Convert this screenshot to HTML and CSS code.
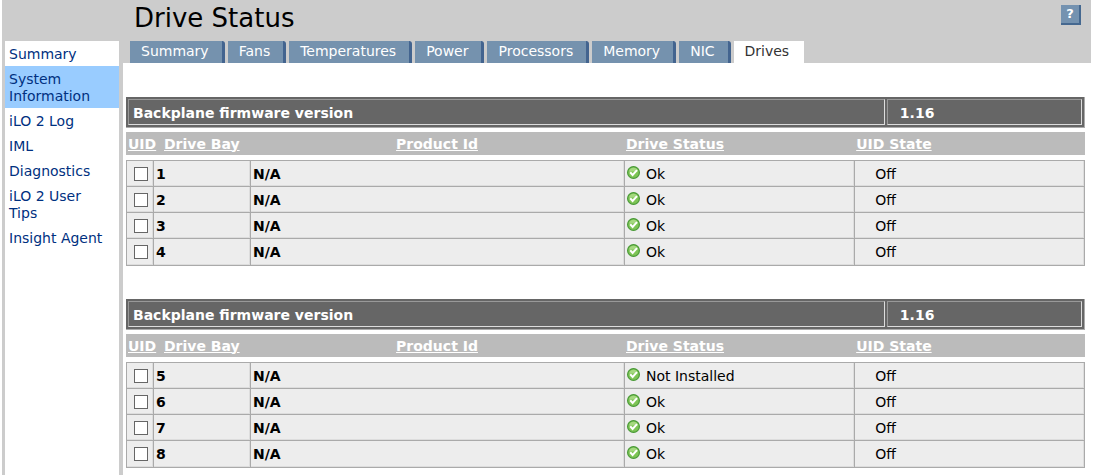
FILE: index.html
```html
<!DOCTYPE html>
<html lang="en">
<head>
	<meta charset="utf-8">
	<title>Drive Status</title>
	<link rel="stylesheet" href="styles.css">
</head>
<body>
<svg class="defs" aria-hidden="true">
	<symbol id="ok" viewBox="0 0 13 13">
		<circle cx="6.5" cy="6.5" r="5.9" fill="#7dc455" stroke="#4a9a38" stroke-width="1.2"/>
		<path d="M2 5.5a4.6 4.6 0 0 1 9 0z" fill="#a4d87f"/>
		<path d="M3.2 6.3l2.4 2.6 4.4-4.8" fill="none" stroke="#fff" stroke-width="2"/>
	</symbol>
</svg>
<div class="page">
	<header class="header">
		<div class="title">
			<h1>Drive Status</h1>
			<a class="help" href="#help" aria-label="Help">?</a>
		</div>
		<nav class="tabs">
			<a href="#summary">Summary</a>
			<a href="#fans">Fans</a>
			<a href="#temperatures">Temperatures</a>
			<a href="#power">Power</a>
			<a href="#processors">Processors</a>
			<a href="#memory">Memory</a>
			<a href="#nic">NIC</a>
			<a class="active" href="#drives">Drives</a>
		</nav>
	</header>
	<div class="content">
		<nav class="sidebar">
			<a href="#home">Summary</a>
			<a class="active" href="#system">System Information</a>
			<a href="#log">iLO 2 Log</a>
			<a href="#iml">IML</a>
			<a href="#diagnostics">Diagnostics</a>
			<a href="#tips">iLO 2 User Tips</a>
			<a href="#agent">Insight Agent</a>
		</nav>
		<main class="main">
			<section class="backplane">
				<table class="firmware">
					<tr><th class="label" scope="row">Backplane firmware version</th><td>1.16</td></tr>
				</table>
				<table class="drives">
					<colgroup><col class="c-uid"><col class="c-bay"><col class="c-product"><col class="c-status"><col class="c-state"></colgroup>
					<thead>
						<tr><th>UID</th><th class="bay">Drive Bay</th><th class="product">Product Id</th><th>Drive Status</th><th>UID State</th></tr>
					</thead>
					<tbody>
						<tr><td class="uid"><input type="checkbox" aria-label="UID 1"></td><td class="b">1</td><td class="b">N/A</td><td><svg class="ok"><use href="#ok"/></svg>Ok</td><td class="state">Off</td></tr>
						<tr><td class="uid"><input type="checkbox" aria-label="UID 2"></td><td class="b">2</td><td class="b">N/A</td><td><svg class="ok"><use href="#ok"/></svg>Ok</td><td class="state">Off</td></tr>
						<tr><td class="uid"><input type="checkbox" aria-label="UID 3"></td><td class="b">3</td><td class="b">N/A</td><td><svg class="ok"><use href="#ok"/></svg>Ok</td><td class="state">Off</td></tr>
						<tr><td class="uid"><input type="checkbox" aria-label="UID 4"></td><td class="b">4</td><td class="b">N/A</td><td><svg class="ok"><use href="#ok"/></svg>Ok</td><td class="state">Off</td></tr>
					</tbody>
				</table>
			</section>
			<section class="backplane">
				<table class="firmware">
					<tr><th class="label" scope="row">Backplane firmware version</th><td>1.16</td></tr>
				</table>
				<table class="drives">
					<colgroup><col class="c-uid"><col class="c-bay"><col class="c-product"><col class="c-status"><col class="c-state"></colgroup>
					<thead>
						<tr><th>UID</th><th class="bay">Drive Bay</th><th class="product">Product Id</th><th>Drive Status</th><th>UID State</th></tr>
					</thead>
					<tbody>
						<tr><td class="uid"><input type="checkbox" aria-label="UID 5"></td><td class="b">5</td><td class="b">N/A</td><td><svg class="ok"><use href="#ok"/></svg>Not Installed</td><td class="state">Off</td></tr>
						<tr><td class="uid"><input type="checkbox" aria-label="UID 6"></td><td class="b">6</td><td class="b">N/A</td><td><svg class="ok"><use href="#ok"/></svg>Ok</td><td class="state">Off</td></tr>
						<tr><td class="uid"><input type="checkbox" aria-label="UID 7"></td><td class="b">7</td><td class="b">N/A</td><td><svg class="ok"><use href="#ok"/></svg>Ok</td><td class="state">Off</td></tr>
						<tr><td class="uid"><input type="checkbox" aria-label="UID 8"></td><td class="b">8</td><td class="b">N/A</td><td><svg class="ok"><use href="#ok"/></svg>Ok</td><td class="state">Off</td></tr>
					</tbody>
				</table>
			</section>
		</main>
	</div>
</div>
</body>
</html>
```
FILE: styles.css
```css
* {
	box-sizing: border-box;
}
body {
	margin: 0;
	background: #fff;
	color: #000;
	font-family: Verdana, "DejaVu Sans", sans-serif;
	font-size: 14px;
}
a {
	text-decoration: none;
}
.defs {
	display: none;
}
.page {
	display: flex;
	flex-direction: column;
	min-height: 100vh;
	padding: 0 7px 0 2px;
}

/* grey bar with the title and the tabs */
.header {
	background: #ccc;
}
.title {
	display: flex;
	justify-content: space-between;
	align-items: flex-start;
	height: 41px;
	padding: 3px 10px 0 132px;
}
.title h1 {
	margin: 0;
	font-size: 26px;
	font-weight: normal;
	line-height: 30px;
}
.help {
	width: 20px;
	height: 20px;
	margin-top: 2px;
	border: solid #456890;
	border-width: 0 2px 2px 0;
	background: #7492b0;
	color: #fff;
	font-size: 13px;
	font-weight: bold;
	line-height: 18px;
	text-align: center;
}
.tabs {
	display: flex;
	gap: 3px;
	padding-left: 128px;
}
.tabs a {
	height: 22px;
	padding: 0 13px 0 11px;
	border-right: 3px solid #43648f;
	border-top-right-radius: 3px;
	background: #7592ae;
	color: #fff;
	line-height: 21px;
}
.tabs .active {
	padding-right: 15px;
	border: 0;
	border-radius: 0;
	background: #fff;
	color: #333;
}

.content {
	display: flex;
	flex: 1;
}
.sidebar {
	flex: none;
	width: 121px;
	margin-top: -22px;
	border: solid #ccc;
	border-width: 0 4px 0 3px;
	background: #fff;
}
.sidebar a {
	display: block;
	padding: 5px 12px 3px 4px;
	color: #003080;
	line-height: 17px;
}
.sidebar a:last-child {
	padding-right: 0;
}
.sidebar .active {
	background: #9cf;
}
.main {
	flex: 1;
	padding: 34px 6px 0 3px;
}
.backplane {
	margin-bottom: 33px;
}
.backplane:last-child {
	margin-bottom: 0;
}

/* firmware bar */
.firmware {
	width: 100%;
	table-layout: fixed;
	margin-bottom: 4px;
	border: solid #aaa;
	border-width: 0 1px 1px 0;
	border-spacing: 2px;
	background: #666;
	color: #fff;
	font-weight: bold;
}
.firmware th,
.firmware td {
	height: 26px;
	padding: 2px 4px 0;
	border: 1px solid;
	border-color: #999 #ddd #ddd #999;
	text-align: left;
}
.firmware .label {
	width: 79.5%;
}
.firmware td {
	padding-left: 12px;
}

/* drive list */
.drives {
	width: 100%;
	table-layout: fixed;
	border-spacing: 0;
}
.c-uid { width: 27px; }
.c-bay { width: 97px; }
.c-product { width: 39%; }
.c-status { width: 24%; }
.drives th {
	height: 28px;
	padding: 0 2px;
	border-bottom: 5px solid #fff;
	background: #bbb;
	color: #fff;
	text-align: left;
	text-decoration: underline;
	white-space: nowrap;
}
.drives .bay {
	padding-left: 11px;
}
.drives .product {
	text-align: center;
}
.drives td {
	height: 26px;
	padding: 0 2px;
	border: solid #aaa;
	border-width: 1px 0 0 1px;
	background: #ededed;
	box-shadow: inset -1px -1px #ddd;
}
.drives td:last-child {
	border-right-width: 1px;
}
.drives tbody tr:last-child td {
	height: 28px;
	border-bottom-width: 1px;
}
.drives .uid {
	padding: 0 0 0 7px;
}
.drives .b {
	font-weight: bold;
}
.drives .state {
	padding-left: 20px;
}
.uid input {
	display: block;
	appearance: none;
	width: 14px;
	height: 14px;
	margin: 0;
	border: 1px solid #666;
	background: #fff;
}
.uid input:checked {
	background: #43648f;
}
.ok {
	width: 13px;
	height: 13px;
	margin-right: 6px;
}
```
